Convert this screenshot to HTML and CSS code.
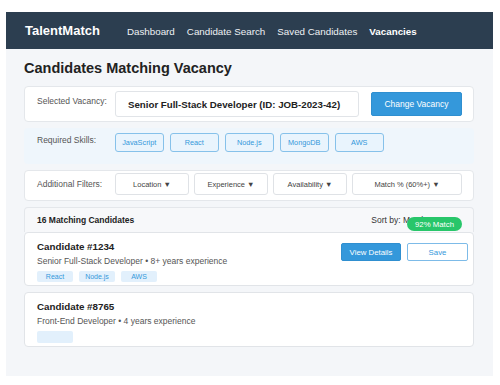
FILE: index.html
```html
<!DOCTYPE html>
<html lang="en">
<head>
<meta charset="utf-8">
<title>TalentMatch – Vacancies</title>
<link rel="stylesheet" href="styles.css">
</head>
<body>
<div class="app">
  <header class="topbar">
    <div class="logo">TalentMatch</div>
    <nav class="nav">
      <a class="nav-link">Dashboard</a>
      <a class="nav-link">Candidate Search</a>
      <a class="nav-link">Saved Candidates</a>
      <a class="nav-link active">Vacancies</a>
    </nav>
  </header>
  <main class="content">
    <h1 class="page-title">Candidates Matching Vacancy</h1>

    <section class="panel vacancy-row">
      <span class="field-label top">Selected Vacancy:</span>
      <div class="vacancy-input">Senior Full-Stack Developer (ID: JOB-2023-42)</div>
      <button class="btn btn-primary btn-change">Change Vacancy</button>
    </section>

    <section class="skills-row">
      <span class="field-label skills-label">Required Skills:</span>
      <div class="skill-list">
        <span class="skill">JavaScript</span>
        <span class="skill">React</span>
        <span class="skill">Node.js</span>
        <span class="skill">MongoDB</span>
        <span class="skill">AWS</span>
      </div>
    </section>

    <section class="panel filters-row">
      <span class="field-label">Additional Filters:</span>
      <div class="filter-list">
        <button class="filter">Location ▼</button>
        <button class="filter">Experience ▼</button>
        <button class="filter">Availability ▼</button>
        <button class="filter filter-wide">Match % (60%+) ▼</button>
      </div>
    </section>

    <section class="results">
      <div class="results-head">
        <span class="results-count">16 Matching Candidates</span>
        <span class="sort">Sort by: Match %</span>
      </div>

      <article class="cand-card">
        <span class="match-badge">92% Match</span>
        <div class="cand-info">
          <h2 class="cand-name">Candidate #1234</h2>
          <p class="cand-meta">Senior Full-Stack Developer • 8+ years experience</p>
          <div class="tag-list">
            <span class="tag">React</span>
            <span class="tag">Node.js</span>
            <span class="tag">AWS</span>
          </div>
        </div>
        <div class="cand-actions">
          <button class="btn btn-primary btn-small">View Details</button>
          <button class="btn btn-outline btn-small">Save</button>
        </div>
      </article>

      <article class="cand-card second">
        <div class="cand-info">
          <h2 class="cand-name">Candidate #8765</h2>
          <p class="cand-meta">Front-End Developer • 4 years experience</p>
          <div class="tag-list">
            <span class="tag tag-empty"></span>
          </div>
        </div>
      </article>
    </section>
  </main>
</div>
</body>
</html>
```
FILE: styles.css
```css
* { box-sizing: border-box; }

html, body {
  margin: 0;
  padding: 0;
  background: #ffffff;
  font-family: "Liberation Sans", Arial, Helvetica, sans-serif;
  color: #222;
}

.app {
  margin: 12px 7px 0 6px;
  height: 364px;
  background: #f4f6f9;
  display: flex;
  flex-direction: column;
}

/* Top bar */
.topbar {
  height: 37px;
  background: #2c3e50;
  display: flex;
  align-items: center;
  padding-left: 19px;
}
.logo {
  color: #ffffff;
  font-weight: bold;
  font-size: 13px;
  margin-right: 27px;
  padding-bottom: 1px;
}
.nav {
  display: flex;
  gap: 12px;
  padding-top: 1px;
}
.nav-link {
  color: #eef1f4;
  font-size: 9.8px;
  text-decoration: none;
}
.nav-link.active {
  color: #ffffff;
  font-weight: bold;
}

/* Content */
.content {
  padding: 0 19px 0 18px;
  display: flex;
  flex-direction: column;
}
.page-title {
  margin: 11px 0 9px;
  font-size: 14.5px;
  line-height: 17px;
  font-weight: bold;
  color: #222;
}

.panel {
  background: #ffffff;
  border: 1px solid #e4e7eb;
  border-radius: 4px;
}

.field-label {
  width: 78px;
  flex: none;
  font-size: 8.5px;
  line-height: 10px;
  color: #555;
}

/* Vacancy row */
.vacancy-row {
  height: 36px;
  display: flex;
  align-items: center;
  padding: 0 11px 0 12px;
}
.vacancy-row .field-label.top {
  align-self: flex-start;
  margin-top: 9px;
}
.vacancy-input {
  flex: 1;
  height: 26px;
  border: 1px solid #e1e4e8;
  border-radius: 3px;
  background: #fff;
  font-size: 9.7px;
  font-weight: bold;
  color: #222;
  display: flex;
  align-items: center;
  padding-left: 12px;
  white-space: nowrap;
}
.btn {
  font-family: inherit;
  border-radius: 2px;
  cursor: pointer;
}
.btn-primary {
  background: #3498db;
  border: 1px solid #2f8fd0;
  color: #ffffff;
}
.btn-change {
  margin-left: 12px;
  width: 91px;
  height: 24px;
  font-size: 8.5px;
  padding: 0;
}

/* Skills */
.skills-row {
  margin-top: 6px;
  height: 36px;
  background: #eff6fc;
  border-radius: 4px;
  display: flex;
  align-items: flex-start;
  padding: 5px 12px 0 13px;
}
.skills-label {
  margin-top: 1.5px;
}
.skill-list {
  display: flex;
  gap: 6.5px;
}
.skill {
  width: 48.5px;
  height: 19px;
  border: 1px solid #86c1ea;
  border-radius: 3px;
  background: #e9f4fd;
  color: #3498db;
  font-size: 7.3px;
  display: flex;
  align-items: center;
  justify-content: center;
}

/* Filters */
.filters-row {
  margin-top: 6px;
  height: 31px;
  display: flex;
  align-items: center;
  padding: 2px 11px 5px 12px;
}
.filter-list {
  flex: 1;
  display: flex;
  gap: 5px;
}
.filter {
  width: 74px;
  height: 22px;
  background: #ffffff;
  border: 1px solid #dfe2e6;
  border-radius: 3px;
  font-family: inherit;
  font-size: 7.5px;
  color: #444;
  padding: 0;
}
.filter-wide {
  flex: 1;
}

/* Results */
.results {
  margin-top: 6px;
  display: flex;
  flex-direction: column;
}
.results-head {
  height: 25px;
  background: #f7f8fa;
  border: 1px solid #e4e7eb;
  border-bottom: none;
  border-radius: 4px 4px 0 0;
  display: flex;
  align-items: center;
  justify-content: space-between;
  padding: 0 12px 0 12px;
}
.results-count {
  font-size: 8.5px;
  font-weight: bold;
  color: #222;
}
.sort {
  font-size: 8.5px;
  color: #333;
  margin-right: 25px;
}

.cand-card {
  position: relative;
  background: #ffffff;
  border: 1px solid #e1e4e8;
  border-radius: 4px;
  display: flex;
  justify-content: space-between;
  align-items: flex-start;
  padding: 8px 5px 3px 12px;
}
.cand-card.second {
  margin-top: 6px;
}
.match-badge {
  position: absolute;
  top: -16px;
  right: 11px;
  width: 55px;
  height: 14px;
  border-radius: 7px;
  background: #28c66a;
  color: #ffffff;
  font-size: 7.8px;
  display: flex;
  align-items: center;
  justify-content: center;
}
.cand-name {
  margin: 0;
  font-size: 9.8px;
  line-height: 12px;
  font-weight: bold;
  color: #222;
}
.cand-meta {
  margin: 3px 0 0;
  font-size: 8.5px;
  line-height: 10px;
  color: #555;
}
.tag-list {
  margin-top: 5px;
  display: flex;
  gap: 6px;
}
.tag {
  width: 36px;
  height: 11px;
  border-radius: 2px;
  background: #e2f0fc;
  color: #3498db;
  font-size: 7px;
  display: flex;
  align-items: center;
  justify-content: center;
}
.tag-empty {
  height: 12px;
}
.cand-actions {
  display: flex;
  gap: 6px;
  margin-top: 2px;
}
.btn-small {
  height: 18px;
  font-size: 7.8px;
  padding: 0;
}
.btn-primary.btn-small {
  width: 60px;
}
.btn-outline {
  width: 61px;
  background: #ffffff;
  border: 1px solid #7dbbe8;
  color: #3498db;
}
```
